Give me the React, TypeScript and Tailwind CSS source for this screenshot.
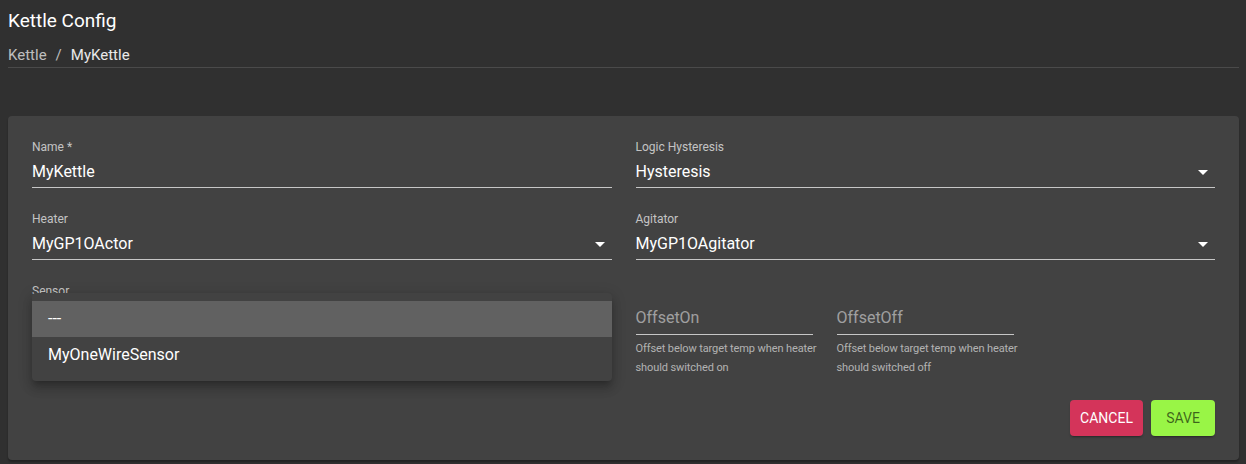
import React from 'react';

const font = { fontFamily: '"Roboto", "Liberation Sans", sans-serif' };

function Caret() {
  return (
    <svg className="absolute right-0 top-1/2 -translate-y-1/2 h-6 w-6" viewBox="0 0 24 24" fill="#ffffff">
      <path d="M7 10l5 5 5-5z" />
    </svg>
  );
}

function Field({ label, value, select }: { label: string; value: string; select?: boolean }) {
  return (
    <div className="flex flex-col">
      <label className="text-[12px] leading-[14px] text-white/70">{label}</label>
      <div className="relative mt-[2px] flex h-[32px] items-center border-b border-white/70">
        <span className="text-[16px] leading-[20px] text-white">{value}</span>
        {select && <Caret />}
      </div>
    </div>
  );
}

function OffsetField({ placeholder, help }: { placeholder: string; help: React.ReactNode }) {
  return (
    <div className="flex w-[177px] flex-col">
      <div className="flex h-[33px] items-end border-b border-white/70 pb-[6px]">
        <span className="text-[16px] leading-[20px] text-white/50">{placeholder}</span>
      </div>
      <p className="mt-[4px] whitespace-nowrap text-[11px] leading-[19px] tracking-[-0.1px] text-white/60">{help}</p>
    </div>
  );
}

export default function App() {
  return (
    <div className="min-h-[464px] bg-[#303030] pl-2 pr-[7px] pt-[8px] text-white" style={font}>
      <h1 className="text-[19px] leading-[26px] text-white">Kettle Config</h1>
      <div className="mt-[11px] flex items-center gap-[9px] border-b border-[#4a4a4a] pb-[2px] text-[15px] leading-[20px]">
        <span className="text-white/70">Kettle</span>
        <span className="text-white/70">/</span>
        <span className="text-white/90">MyKettle</span>
      </div>

      <div className="mt-[48px] rounded-[4px] bg-[#424242] px-6 pt-6 pb-6 shadow-[0_2px_2px_rgba(0,0,0,0.3)]">
        <div className="grid grid-cols-2 gap-x-6 gap-y-[24px]">
          <Field label="Name *" value="MyKettle" />
          <Field label="Logic Hysteresis" value="Hysteresis" select />
          <Field label="Heater" value="MyGP1OActor" select />
          <Field label="Agitator" value="MyGP1OAgitator" select />

          <div className="relative">
            <label className="block text-[12px] leading-[14px] text-white/70">Sensor</label>
            <div className="relative mt-[2px] h-[32px] border-b border-white/70" />
            <div className="absolute left-0 right-0 top-[9px] z-10 rounded-[4px] bg-[#424242] py-2 shadow-[0_5px_5px_-3px_rgba(0,0,0,0.2),0_8px_10px_1px_rgba(0,0,0,0.14),0_3px_14px_2px_rgba(0,0,0,0.12)]">
              <div className="flex h-[36px] items-center bg-[#616161] px-4 text-[16px] text-white">---</div>
              <div className="flex h-[36px] items-center px-4 text-[16px] text-white">MyOneWireSensor</div>
            </div>
          </div>

          <div className="flex gap-6 pt-[18px]">
            <OffsetField
              placeholder="OffsetOn"
              help={<>Offset below target temp when heater<br />should switched on</>}
            />
            <OffsetField
              placeholder="OffsetOff"
              help={<>Offset below target temp when heater<br />should switched off</>}
            />
          </div>
        </div>

        <div className="mt-[23px] flex justify-end gap-2">
          <button className="h-9 w-[73px] rounded-[4px] bg-[#d4345a] text-[14px] uppercase text-white shadow-[0_3px_1px_-2px_rgba(0,0,0,0.2),0_2px_2px_rgba(0,0,0,0.14)]">
            Cancel
          </button>
          <button className="h-9 w-[64px] rounded-[4px] bg-[#99f546] text-[14px] uppercase text-black/60 shadow-[0_3px_1px_-2px_rgba(0,0,0,0.2),0_2px_2px_rgba(0,0,0,0.14)]">
            Save
          </button>
        </div>
      </div>
    </div>
  );
}
